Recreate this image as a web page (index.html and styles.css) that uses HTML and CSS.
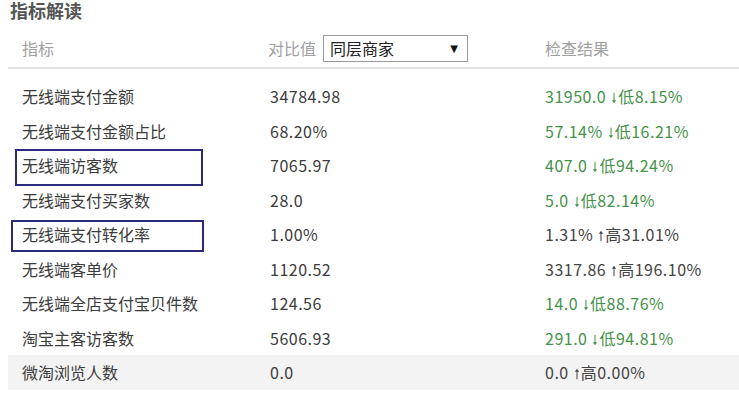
FILE: index.html
```html
<!DOCTYPE html>
<html lang="zh-CN">
<head>
<meta charset="utf-8">
<title>指标解读</title>
<link rel="stylesheet" href="styles.css">
</head>
<body>
<div class="title">指标解读</div>
<div class="table">
  <div class="thead">
    <div class="th">指标</div>
    <div class="th th-compare">对比值
      <div class="select"><span>同层商家</span><span class="caret">▼</span></div>
    </div>
    <div class="th">检查结果</div>
  </div>
  <div class="tbody">
    <div class="row"><div class="c1">无线端支付金额</div><div class="c2">34784.98</div><div class="c3 low">31950.0<svg class="arr" viewBox="0 0 7 14"><path d="M3.5 1V11" /><path class="head" d="M1 9.5L3.5 13L6 9.5Z"/></svg>低8.15%</div></div>
    <div class="row"><div class="c1">无线端支付金额占比</div><div class="c2">68.20%</div><div class="c3 low">57.14%<svg class="arr" viewBox="0 0 7 14"><path d="M3.5 1V11" /><path class="head" d="M1 9.5L3.5 13L6 9.5Z"/></svg>低16.21%</div></div>
    <div class="row"><div class="c1">无线端访客数<span class="mark mark-a"></span></div><div class="c2">7065.97</div><div class="c3 low">407.0<svg class="arr" viewBox="0 0 7 14"><path d="M3.5 1V11" /><path class="head" d="M1 9.5L3.5 13L6 9.5Z"/></svg>低94.24%</div></div>
    <div class="row"><div class="c1">无线端支付买家数</div><div class="c2">28.0</div><div class="c3 low">5.0<svg class="arr" viewBox="0 0 7 14"><path d="M3.5 1V11" /><path class="head" d="M1 9.5L3.5 13L6 9.5Z"/></svg>低82.14%</div></div>
    <div class="row"><div class="c1">无线端支付转化率<span class="mark mark-b"></span></div><div class="c2">1.00%</div><div class="c3 high">1.31%<svg class="arr" viewBox="0 0 7 14"><path d="M3.5 3V13" /><path class="head" d="M1 4.5L3.5 1L6 4.5Z"/></svg>高31.01%</div></div>
    <div class="row"><div class="c1">无线端客单价</div><div class="c2">1120.52</div><div class="c3 high">3317.86<svg class="arr" viewBox="0 0 7 14"><path d="M3.5 3V13" /><path class="head" d="M1 4.5L3.5 1L6 4.5Z"/></svg>高196.10%</div></div>
    <div class="row"><div class="c1">无线端全店支付宝贝件数</div><div class="c2">124.56</div><div class="c3 low">14.0<svg class="arr" viewBox="0 0 7 14"><path d="M3.5 1V11" /><path class="head" d="M1 9.5L3.5 13L6 9.5Z"/></svg>低88.76%</div></div>
    <div class="row"><div class="c1">淘宝主客访客数</div><div class="c2">5606.93</div><div class="c3 low">291.0<svg class="arr" viewBox="0 0 7 14"><path d="M3.5 1V11" /><path class="head" d="M1 9.5L3.5 13L6 9.5Z"/></svg>低94.81%</div></div>
    <div class="row row-gray"><div class="c1">微淘浏览人数</div><div class="c2">0.0</div><div class="c3 high">0.0<svg class="arr" viewBox="0 0 7 14"><path d="M3.5 3V13" /><path class="head" d="M1 4.5L3.5 1L6 4.5Z"/></svg>高0.00%</div></div>
  </div>
</div>
</body>
</html>
```
FILE: styles.css
```css
html, body {
  margin: 0;
  padding: 0;
  background: #ffffff;
}
body {
  font-family: "Noto Sans CJK SC", "Noto Sans", sans-serif;
  color: #3c3c3c;
  font-size: 16px;
}
.title {
  padding: 1px 0 0 10px;
  font-size: 18px;
  line-height: 18px;
  font-weight: bold;
  color: #555555;
}
.table {
  margin-left: 8px;
  margin-top: 14px;
}
.thead {
  display: grid;
  grid-template-columns: 262px 275px 1fr;
  align-items: center;
  height: 36px;
  box-sizing: border-box;
  padding-bottom: 6px;
  border-bottom: 2px solid #e2e2e2;
}
.th {
  color: #a0a0a0;
  line-height: 30px;
  font-size: 16px;
}
.thead .th:first-child {
  padding-left: 14px;
}
.th-compare {
  display: flex;
  align-items: center;
  gap: 7px;
  margin-left: -2px;
}
.select {
  width: 145px;
  height: 27px;
  box-sizing: border-box;
  border: 1px solid #9a9a9a;
  display: flex;
  align-items: center;
  justify-content: space-between;
  padding: 0 9px 0 6px;
  color: #222222;
  line-height: 25px;
}
.caret {
  font-family: "DejaVu Sans", sans-serif;
  font-size: 10px;
  color: #111111;
}
.tbody {
  margin-top: 10px;
}
.row {
  display: grid;
  grid-template-columns: 262px 275px 1fr;
  height: 34.5px;
  align-items: center;
  line-height: 20px;
}
.row-gray {
  background: #f3f3f3;
}
.c1 {
  padding-left: 14px;
  position: relative;
  height: 100%;
  display: flex;
  align-items: center;
}
.c2, .c3 {
  letter-spacing: 0.5px;
}
.c3 {
  white-space: nowrap;
}
.low {
  color: #45924a;
}
.high {
  color: #444444;
}
.arr {
  display: inline-block;
  width: 6px;
  height: 14px;
  margin: 0 1px 0 5px;
  vertical-align: -2px;
}
.arr path {
  stroke: currentColor;
  stroke-width: 1.2;
  fill: none;
}
.arr path.head {
  fill: currentColor;
  stroke: none;
}
.mark {
  position: absolute;
  border: 2px solid #2c2a7e;
  box-sizing: border-box;
  pointer-events: none;
}
.mark-a {
  left: 7px;
  top: 1px;
  width: 188px;
  height: 37px;
}
.mark-b {
  left: 3px;
  top: 3px;
  width: 193px;
  height: 32px;
}
```
